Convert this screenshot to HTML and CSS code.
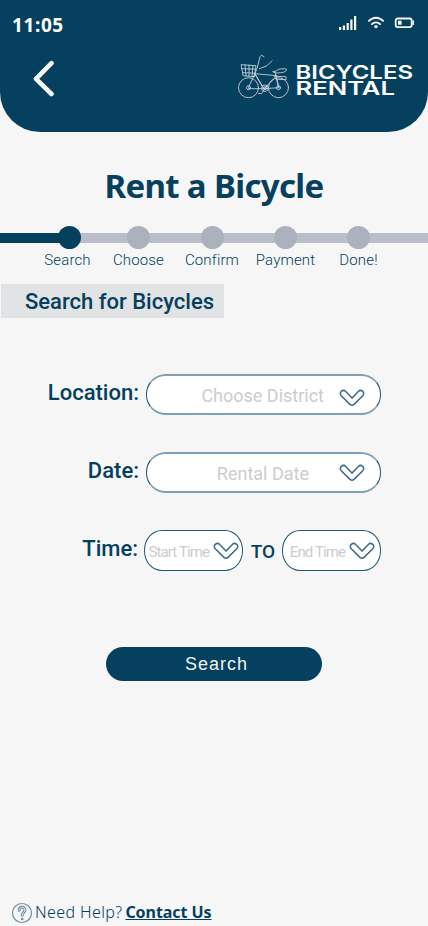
FILE: index.html
```html
<!DOCTYPE html>
<html lang="en">
<head>
<meta charset="utf-8">
<title>Rent a Bicycle</title>
<meta name="viewport" content="width=device-width, initial-scale=1">
<link rel="stylesheet" href="styles.css">
</head>
<body>
<svg class="defs" width="0" height="0">
  <symbol id="chevron" viewBox="0 0 26 18">
    <path d="M13 9.1 6.700 2.600C5.500 1.300 3.600 1.200 2.300 2.400 1 3.600 1 5.500 2.200 6.700L11 15.400C12.300 16.600 13.700 16.600 15 15.400L23.800 6.700C25 5.500 25 3.600 23.700 2.400 22.400 1.200 20.500 1.300 19.300 2.600Z"/>
  </symbol>
</svg>
<div class="screen">
  <header class="header">
    <div class="status">
      <span class="clock">11:05</span>
      <svg class="status-icons" width="78" height="18" viewBox="0 0 78 18">
        <g fill="#f6f6f6">
          <path d="M1 13h2.200v3H1zM4.800 11.500H7V16H4.800zM8.600 9h2.200v7H8.600zM12.300 5.500h2.200V16h-2.200zM16 2h2.200v14H16z"/>
          <circle cx="38" cy="12.600" r="1.700"/>
        </g>
        <g fill="none" stroke="#f6f6f6" stroke-width="1.800">
          <path d="M30.300 7.400q7.700-7.200 15.400 0M33.300 10.600q4.700-4.400 9.400 0"/>
          <rect x="57.700" y="4.500" width="16" height="8.600" rx="2"/>
        </g>
        <path d="M60 6.800h3.600v4H60zM74.500 6.500h1.500v4.600h-1.500z" fill="#f6f6f6"/>
      </svg>
    </div>
    <div class="nav">
      <svg class="back" width="22" height="38" viewBox="0 0 22 38"><path d="M18.500 3.200 3 18.800 18.500 34" fill="none" stroke="#f6f6f6" stroke-width="4.600" stroke-linecap="round" stroke-linejoin="round"/></svg>
      <svg class="logo" width="180" height="50" viewBox="0 0 180 50">
        <g transform="translate(-1 -1.300)" fill="none" stroke="#c4d0d8" stroke-width=".9" stroke-linecap="round" stroke-linejoin="round">
          <circle cx="12.500" cy="36" r="10"/><circle cx="12.500" cy="36" r="2"/>
          <circle cx="42.500" cy="36" r="10"/><circle cx="42.500" cy="36" r="2"/>
          <path d="M5.500 13 20 14 18.500 25 7.500 24ZM6 17l13.500.5M7 21l12 .5M9 13l1 11M13 13.500v11M17 14l-1 10.500"/>
          <path d="M12.500 36 21 17 24 5 25.500 3.500 28 5M23.500 17 31 14 34 11 36 9M19 22 41 24 28 37ZM19 22 28 37 42.500 36 39 20M28 37H12.500M40 24 43 36"/>
          <path d="M37 20q4-.5 6-2.500 6-1 7.500 0 .5 3-6 3.500-6 1-7.500-1ZM38 24.500l12 .5v3l-10-.5"/>
          <circle cx="29" cy="36.500" r="3.300"/><circle cx="29" cy="36.500" r="1.500"/>
          <path d="M29 36.500 32 33.500M29 36.500 25.500 42l-3-.3"/>
        </g>
        <g class="logo-text">
          <text x="58.500" y="25.500" textLength="117.500" lengthAdjust="spacingAndGlyphs">BICYCLES</text>
          <text x="58.500" y="41.500" textLength="99.500" lengthAdjust="spacingAndGlyphs">RENTAL</text>
        </g>
      </svg>
    </div>
  </header>

  <main>
    <h1 class="title">Rent a Bicycle</h1>

    <ol class="steps">
      <li class="step active"><i></i><span>Search</span></li>
      <li class="step"><i></i><span>Choose</span></li>
      <li class="step"><i></i><span>Confirm</span></li>
      <li class="step"><i></i><span>Payment</span></li>
      <li class="step"><i></i><span>Done!</span></li>
    </ol>

    <h2 class="section">Search for Bicycles</h2>

    <form class="form">
      <div class="row">
        <span class="label">Location:</span>
        <div class="field"><span class="district">Choose District</span><svg class="chev low"><use href="#chevron"/></svg></div>
      </div>
      <div class="row">
        <span class="label">Date:</span>
        <div class="field"><span class="rental">Rental Date</span><svg class="chev"><use href="#chevron"/></svg></div>
      </div>
      <div class="row">
        <span class="label time">Time:</span>
        <div class="times">
          <div class="field small"><span>Start Time</span><svg class="chev"><use href="#chevron"/></svg></div>
          <span class="to">TO</span>
          <div class="field small end"><span>End Time</span><svg class="chev"><use href="#chevron"/></svg></div>
        </div>
      </div>
      <button class="submit" type="button">Search</button>
    </form>
  </main>

  <footer class="help">
    <svg width="22" height="22" viewBox="0 0 22 22" fill="none">
      <circle cx="11" cy="11" r="9.500" stroke="#6f8fa5" stroke-width="1.200"/>
      <path d="M8.200 8.200C8.200 4.400 14 4.500 14 8 14 10.400 11.200 10.300 11.200 13.300" stroke="#6f8fa5" stroke-width="3" stroke-linecap="round"/>
      <path d="M8.200 8.200C8.200 4.400 14 4.500 14 8 14 10.400 11.200 10.300 11.200 13.300" stroke="#f6f6f6" stroke-width="1" stroke-linecap="round"/>
      <circle cx="11.200" cy="17" r="1.300" fill="#6f8fa5"/>
    </svg>
    <span class="need">Need Help?</span>
    <a class="contact">Contact Us</a>
  </footer>
</div>
</body>
</html>
```
FILE: styles.css
```css
* { box-sizing: border-box; }
body {
  margin: 0;
  background: #f6f6f6;
  color: #05405e;
  font-family: Roboto, sans-serif;
}
.defs { display: block; }
.screen {
  width: 428px;
  height: 926px;
  display: flex;
  flex-direction: column;
  overflow: hidden;
}
.header {
  height: 132px;
  flex: none;
  background: #05405e;
  border-radius: 0 0 40px 40px;
}
.status {
  height: 46px;
  padding: 10px 12px 0 12px;
  display: flex;
  justify-content: space-between;
}
.clock {
  color: #fff;
  font: bold 19px/30px "Noto Sans", sans-serif;
  letter-spacing: .6px;
}
.status-icons { margin: 4px 0 0; }
.nav {
  display: flex;
  justify-content: space-between;
  padding: 7px 11px 0 33px;
}
.back { margin-top: 7px; }
.logo-text {
  fill: #fff;
  font: 600 19px Inter, sans-serif;
}
.title {
  margin: 30px 0 0;
  height: 48px;
  text-align: center;
  font: bold 33px/48px "Noto Sans", sans-serif;
  letter-spacing: -.65px;
}
.steps {
  list-style: none;
  margin: 15px 0 0;
  padding: 0 32px 0 33px;
  height: 59px;
  display: grid;
  grid-template-columns: 69px 73px 74px 73px 73px;
  background:
    linear-gradient(#05405e, #05405e) 0 7.500px / 70px 10px no-repeat,
    linear-gradient(#b9bec8, #b9bec8) 0 7.500px / 100% 10px no-repeat;
}
.step {
  display: flex;
  flex-direction: column;
  align-items: center;
}
.step i {
  width: 23px;
  height: 23px;
  margin-top: 1px;
  border-radius: 50%;
  background: #abb1bd;
}
.step.active i { background: #05405e; margin-left: 4px; }
.step span {
  margin-top: 1px;
  font-size: 15px;
  line-height: 20px;
  font-weight: 300;
  letter-spacing: .15px;
}
.section {
  margin: 0 0 0 1px;
  width: 223px;
  height: 34px;
  padding-left: 24px;
  background: #e1e3e4;
  font-size: 22px;
  font-weight: 500;
  line-height: 35px;
  white-space: nowrap;
}
.form { margin-top: 56px; }
.row {
  display: grid;
  grid-template-columns: 139px 235px;
  column-gap: 7px;
  height: 41px;
  margin-bottom: 37px;
}
.label {
  text-align: right;
  font-size: 22px;
  font-weight: 500;
  line-height: 37px;
}
.label.time { padding-right: 1px; }
.field {
  height: 41px;
  display: flex;
  align-items: center;
  justify-content: flex-end;
  padding-right: 15px;
  background: #fff;
  border: 1px solid #215673;
  border-top: 2px solid #7f9fb2;
  border-bottom: 2px solid #7f9fb2;
  border-radius: 20px;
  color: #cbcdcd;
  font-size: 18px;
  white-space: nowrap;
}
.field span { margin-top: 2px; }
.field .district { margin-right: 15px; }
.field .rental { margin-right: 30px; }
.chev {
  width: 26px;
  height: 18px;
  flex: none;
  fill: none;
  stroke: #3d6a85;
  stroke-width: 1.5;
}
.chev.low { margin-top: 6px; }
.times {
  display: flex;
  width: 237px;
  margin-left: -2px;
}
.small {
  width: 99px;
  padding-right: 3px;
  gap: 4px;
  border: 1px solid #215673;
  border-radius: 18px / 20px;
  font-size: 15px;
  letter-spacing: -.9px;
}
.small.end { padding-right: 5px; }
.to {
  width: 39px;
  padding-left: 1px;
  text-align: center;
  font-size: 19px;
  font-weight: 500;
  line-height: 43px;
}
.submit {
  display: block;
  margin: 76px 0 0 106px;
  width: 216px;
  height: 34px;
  padding: 0 0 0 5px;
  border: 0;
  border-radius: 17px;
  background: #05405e;
  color: #f0f2f3;
  font: 18px/34px "Liberation Sans", sans-serif;
  letter-spacing: 1px;
}
.help {
  margin-top: auto;
  height: 27px;
  padding-left: 11px;
  display: flex;
  align-items: center;
  font: 16px/27px "Noto Sans", sans-serif;
}
.need { margin-left: 2px; letter-spacing: .38px; font-weight: 300; }
.contact {
  margin-left: 3px;
  font-weight: bold;
  letter-spacing: -.05px;
  text-decoration: underline;
}
```
